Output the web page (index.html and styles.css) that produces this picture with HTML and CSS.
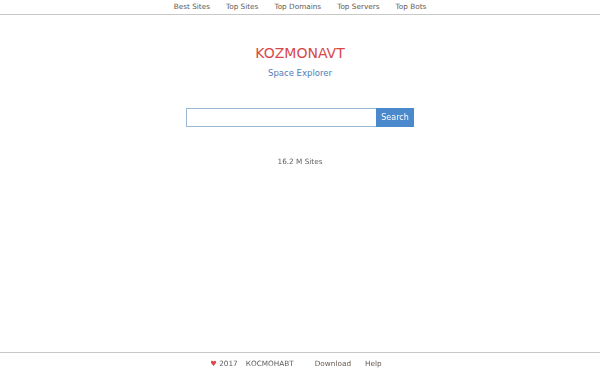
FILE: index.html
```html
<!DOCTYPE html>
<html>
<head>
  <meta charset="utf-8">
  <link rel="stylesheet" href="styles.css">
</head>
<body>
  <div class="page">
    <div class="topnav">
      <a href="#">Best Sites</a>
      <a href="#">Top Sites</a>
      <a href="#">Top Domains</a>
      <a href="#">Top Servers</a>
      <a href="#">Top Bots</a>
    </div>

    <div class="main">
      <h1 class="logo">KOZMONAVT</h1>
      <p class="tagline">Space Explorer</p>

      <form class="search">
        <input type="text" class="search-input" autofocus>
        <button type="button" class="search-button">Search</button>
      </form>

      <div class="count">16.2 M Sites</div>
    </div>

    <div class="footer">
      <span><span class="heart">&#9829;</span> 2017</span>
      <span class="brand">КОСМОНАВТ</span>
      <a href="#" class="gap">Download</a>
      <a href="#">Help</a>
    </div>
  </div>
</body>
</html>
```

FILE: styles.css
```css
body {
  margin: 0;
  font-family: "DejaVu Sans", Verdana, sans-serif;
  font-size: 7.3px;
  color: #5e5e5e;
  background: #fff;
}

a {
  color: #665a50;
  text-decoration: none;
}

.page {
  display: flex;
  flex-direction: column;
  min-height: 375px;
}

.topnav {
  display: flex;
  justify-content: center;
  gap: 16px;
  height: 14px;
  line-height: 13px;
  border-bottom: 1px solid #c8c8c8;
}

.main {
  flex: 1;
  display: flex;
  flex-direction: column;
  align-items: center;
}

.logo {
  margin: 29px 0 0 0;
  font-size: 14px;
  font-weight: normal;
  line-height: 18px;
  color: #d8474a;
}

.tagline {
  margin: 5px 0 0 0;
  font-size: 8.5px;
  line-height: 12px;
  color: #4f7eb8;
}

.search {
  display: flex;
  margin-top: 29px;
}

.search-input {
  box-sizing: border-box;
  width: 190px;
  height: 19px;
  margin: 0;
  padding: 0 3px;
  border: 1px solid #9ab7d5;
  border-right: none;
  outline: none;
  font-family: inherit;
  font-size: 8px;
}

.search-button {
  box-sizing: border-box;
  width: 38px;
  height: 19px;
  margin: 0;
  padding: 0;
  border: 1px solid #4a8acc;
  background: #4a8acc;
  color: #fff;
  font-family: inherit;
  font-size: 8px;
}

.count {
  margin-top: 29px;
  line-height: 12px;
}

.footer {
  display: flex;
  justify-content: center;
  gap: 8px;
  height: 22px;
  padding-right: 8px;
  line-height: 22px;
  border-top: 1px solid #c8c8c8;
}

.footer .gap {
  margin-left: 13px;
  margin-right: 6px;
}

.heart {
  color: #d8474a;
}
```
